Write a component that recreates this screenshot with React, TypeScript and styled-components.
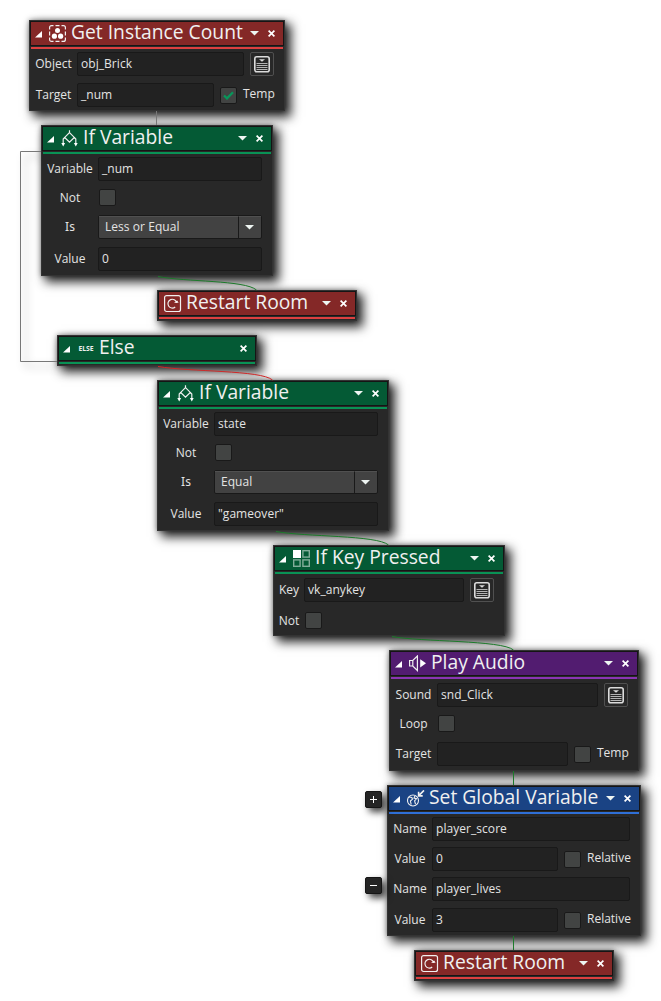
import React from 'react';
import styled, { createGlobalStyle } from 'styled-components';

const Global = createGlobalStyle`
  * { box-sizing: border-box; }
  body { margin: 0; background: #fff; font-family: "Open Sans", "Noto Sans", sans-serif; }
`;

const themes = {
  red: { head: '#842827', stripe: '#dd4040' },
  green: { head: '#045a35', stripe: '#099255' },
  purple: { head: '#521c70', stripe: '#8b35b4' },
  blue: { head: '#1a4384', stripe: '#2f6fd6' },
};
type Tone = keyof typeof themes;

const Canvas = styled.main`
  position: relative;
  width: 661px;
  height: 1001px;
  overflow: hidden;
  background: #fff;
`;
const Wires = styled.svg`
  position: absolute;
  inset: 0;
`;
const Bracket = styled.path`
  filter: drop-shadow(5px 5px 4px rgba(0, 0, 0, 0.4));
`;
const Block = styled.section<{ $x: number; $y: number; $w: number; $h: number }>`
  position: absolute;
  left: ${p => p.$x}px;
  top: ${p => p.$y}px;
  width: ${p => p.$w}px;
  height: ${p => p.$h}px;
  background: #282828;
  border: 1px solid #333;
  box-shadow: 5px 5px 10px 1px rgba(0, 0, 0, 0.85), 0 0 5px rgba(0, 0, 0, 0.4);
`;
const Header = styled.header<{ $tone: Tone; $fold: boolean }>`
  display: flex;
  align-items: center;
  height: 25px;
  border: 1px solid #151515;
  background: ${p => themes[p.$tone].head};
  padding: 0 8px 0 ${p => (p.$fold ? 4 : 5)}px;
`;
const Stripe = styled.div<{ $tone: Tone }>`
  height: 2px;
  margin: 1px 1px 0;
  background: ${p => themes[p.$tone].stripe};
`;
const Title = styled.h2`
  margin: 0 auto 0 4px;
  padding-bottom: 4px;
  font-weight: 400;
  font-size: 19.3px;
  line-height: 22px;
  color: #f0f0f0;
  white-space: nowrap;
`;
const Glyph = styled.svg`
  display: block;
  flex: none;
`;
const IconGlyph = styled(Glyph)`
  margin-top: 1px;
`;
const Body = styled.div`
  padding-left: 3px;
`;
const Row = styled.div<{ $h: number; $mt: number }>`
  display: flex;
  align-items: center;
  height: ${p => p.$h}px;
  margin-top: ${p => p.$mt}px;
`;
const Label = styled.span<{ $w: number; $wide?: boolean }>`
  width: ${p => p.$w}px;
  flex: none;
  padding-right: 3px;
  text-align: center;
  font-family: ${p => (p.$wide ? '"Noto Sans"' : '"Open Sans"')}, sans-serif;
  font-size: 12px;
  line-height: 16px;
  color: #e4e4e4;
  white-space: nowrap;
`;
const Suffix = styled.span`
  padding: 0 0 2px 5px;
  font-size: 12px;
  line-height: 16px;
  color: #e4e4e4;
`;
const CheckGroup = styled.div`
  display: flex;
  align-items: center;
  margin-left: 5px;
`;
const Field = styled.div<{ $w: number }>`
  width: ${p => p.$w}px;
  height: 24px;
  flex: none;
  border: 1px solid #191919;
  border-radius: 2px;
  background: #222;
  padding: 0 3px;
  font-size: 12px;
  letter-spacing: 0.05px;
  line-height: 22px;
  color: #e4e4e4;
  white-space: pre;
`;
const Box = styled.span`
  display: grid;
  place-items: center;
  flex: none;
  width: 17px;
  height: 17px;
  margin: 0 1px;
  border: 1px solid #191919;
  border-radius: 2px;
  background: #424443;
`;
const Select = styled.div`
  display: flex;
  width: 164px;
  height: 24px;
  flex: none;
  border: 1px solid #191919;
  border-radius: 2px;
  background: #424242;
  font-size: 12px;
  letter-spacing: 0.05px;
  line-height: 20px;
  color: #e4e4e4;
`;
const SelectText = styled.span`
  flex: 1;
  padding-left: 6px;
  border-top: 1px solid #505050;
`;
const SelectArrow = styled.span`
  display: grid;
  place-items: center;
  width: 23px;
  padding-right: 2px;
  border-left: 1px solid #191919;
  border-top: 1px solid #505050;
`;
const Picker = styled.span`
  display: grid;
  place-items: center;
  flex: none;
  width: 24px;
  height: 24px;
  margin-left: 6px;
  border: 1px solid #505050;
  border-radius: 2px;
`;
const Toggle = styled.button<{ $x: number; $y: number }>`
  position: absolute;
  left: ${p => p.$x}px;
  top: ${p => p.$y}px;
  display: grid;
  place-items: center;
  width: 17px;
  height: 17px;
  padding: 0;
  border: 1px solid #151515;
  border-radius: 2px;
  background: #242424;
  box-shadow: 4px 4px 7px rgba(0, 0, 0, 0.75);
`;

const Fold = () => (
  <Glyph width="7" height="7">
    <path d="M7 0V6.5H0Z" fill="#fff" />
  </Glyph>
);
const Caret = () => (
  <Glyph width="9" height="5"><path d="M0 0H9L4.5 4.6Z" fill="#eef5f2" /></Glyph>
);
const Controls = styled.div`
  display: flex;
  align-items: center;
  gap: 9px;
`;
const Close = () => (
  <Glyph width="7" height="7"><path d="M.6 .6 6.4 6.4M6.4 .6 .6 6.4" stroke="#fff" strokeWidth="1.7" /></Glyph>
);
const FoldSlot = styled.span`
  padding-top: 1px;
  margin-right: 7px;
`;
const ElseTag = styled.span`
  width: 18px;
  font-size: 6.8px;
  font-weight: 700;
  line-height: 8px;
  color: #eee;
  text-align: center;
`;

type IconName = 'count' | 'diamond' | 'restart' | 'keys' | 'audio' | 'global' | 'else';
const Icon = ({ name }: { name: IconName }) => {
  const s = { fill: 'none', stroke: '#f0f0f0', strokeWidth: 1.2 };
  if (name === 'else') return <ElseTag>ELSE</ElseTag>;
  return (
    <IconGlyph width="18" height="18" viewBox="0 0 18 18">
      {name === 'count' && (
        <g>
          <path
            d="M.6 4.5V2.6Q.6 .6 2.6 .6H4.5M6.5 .6H10.5M12.5 .6H14.4Q16.4 .6 16.4 2.6V4.5M16.4 6.5V10.5M16.4 12.5V14.4Q16.4 16.4 14.4 16.4H12.5M10.5 16.4H6.5M4.5 16.4H2.6Q.6 16.4 .6 14.4V12.5M.6 10.5V6.5"
            {...s}
          />
          <g fill="#fff"><circle cx="8.5" cy="5.4" r="2.5" /><circle cx="5.4" cy="11.2" r="2.6" /><circle cx="11.6" cy="11.2" r="2.6" /></g>
        </g>
      )}
      {name === 'diamond' && (
        <g {...s}>
          <path d="M8.5 .3V3M8.5 2.6 13.3 7.4 8.5 12.2 3.7 7.4ZM3.7 7.4 2.2 9V14M13.3 7.4 14.8 9V14" />
          <path d="M.3 13 2.2 16.4 4.1 13ZM12.9 13 14.8 16.4 16.7 13Z" fill="#fff" stroke="none" />
        </g>
      )}
      {name === 'restart' && (
        <g {...s}>
          <rect x=".6" y=".6" width="15.9" height="15.9" rx="2" />
          <path d="M11.2 12A4.4 4.4 0 1 1 12.6 7.6" />
          <path d="M10 7.8H14.6L13.2 5.4Z" fill="#fff" stroke="none" />
        </g>
      )}
      {name === 'keys' && (
        <g fill="none" stroke="#82ad9a" strokeWidth="1.4">
          <rect x="0" y="0" width="8" height="8" fill="#fff" stroke="none" />
          <rect x="9.9" y=".7" width="6.4" height="6.4" />
          <rect x=".7" y="9.9" width="6.4" height="6.4" />
          <rect x="9.9" y="9.9" width="6.4" height="6.4" />
        </g>
      )}
      {name === 'audio' && (
        <g {...s}>
          <path d="M.6 5.5H3.8L8.4 1V15.5L3.8 11H.6ZM3.8 5.5V11" />
          <path d="M11.2 4.2 17 8.3 11.2 12.4Z" fill="#fff" stroke="none" />
        </g>
      )}
      {name === 'global' && (
        <g {...s} strokeWidth="1.1">
          <circle cx="6" cy="10.5" r="5.5" />
          <path d="M2 7 4.8 7.4 5.5 9.2 3.4 11 4.2 14.5M8 5.8 7 8 9.5 8.6 7.6 10.8 8.5 14" />
          <path d="M17 .4 12 5.4M11.6 1.8V5.9H15.7" strokeWidth="1.6" />
        </g>
      )}
    </IconGlyph>
  );
};

const Pick = () => (
  <Picker>
    <Glyph width="16" height="17" viewBox="0 0 16 17">
      <rect x=".8" y=".8" width="14.4" height="15" rx="2" fill="none" stroke="#dcdcdc" strokeWidth="1.6" />
      <path d="M5 3.2H11L8 5.8Z" fill="#dcdcdc" />
      <path d="M2.5 7.5H13.5M2.5 9.5H13.5M2.5 11.5H13.5M2.5 13.5H13.5" stroke="#b4b4b4" strokeWidth="1" />
    </Glyph>
  </Picker>
);
const Check = ({ on }: { on?: boolean }) => (
  <Box>{on && <Glyph width="11" height="9"><path d="M1 4.5 4 7.4 10 1.2" fill="none" stroke="#08965a" strokeWidth="2.3" /></Glyph>}</Box>
);
const LabelledCheck = ({ on, text }: { on?: boolean; text: string }) => (
  <CheckGroup><Check on={on} /><Suffix>{text}</Suffix></CheckGroup>
);
const Drop = ({ text }: { text: string }) => (
  <Select><SelectText>{text}</SelectText><SelectArrow><Caret /></SelectArrow></Select>
);

type NodeProps = {
  x: number; y: number; w: number; h: number; tone: Tone; icon: IconName; title: string;
  fold?: boolean; menu?: boolean; children?: React.ReactNode;
};
const Node = ({ x, y, w, h, tone, icon, title, fold = true, menu = true, children }: NodeProps) => (
  <Block $x={x} $y={y} $w={w} $h={h}>
    <Header $tone={tone} $fold={fold}>
      {fold && <FoldSlot><Fold /></FoldSlot>}
      <Icon name={icon} />
      <Title>{title}</Title>
      <Controls>{menu && <Caret />}<Close /></Controls>
    </Header>
    <Stripe $tone={tone} />
    <Body>{children}</Body>
  </Block>
);

const Compare = ({ x, y, variable, op, value }: { x: number; y: number; variable: string; op: string; value: string }) => (
  <Node x={x} y={y} w={232} h={151} tone="green" icon="diamond" title="If Variable">
    <Row $h={24} $mt={3}><Label $w={53}>Variable</Label><Field $w={164}>{variable}</Field></Row>
    <Row $h={17} $mt={8}><Label $w={53}>Not</Label><Check /></Row>
    <Row $h={24} $mt={9}><Label $w={53} $wide>Is</Label><Drop text={op} /></Row>
    <Row $h={24} $mt={8}><Label $w={53}>Value</Label><Field $w={164}>{value}</Field></Row>
  </Node>
);

export default function App() {
  return (
    <>
      <Global />
      <Canvas>
        <Node x={29} y={20} w={256} h={91} tone="red" icon="count" title="Get Instance Count">
          <Row $h={24} $mt={3}><Label $w={44}>Object</Label><Field $w={167}>obj_Brick</Field><Pick /></Row>
          <Row $h={24} $mt={7}><Label $w={44}>Target</Label><Field $w={137}>_num</Field><LabelledCheck on text="Temp" /></Row>
        </Node>
        <Compare x={41} y={125} variable="_num" op="Less or Equal" value="0" />
        <Node x={157} y={290} w={200} h={31} tone="red" icon="restart" title="Restart Room" fold={false} />
        <Node x={57} y={335} w={200} h={31} tone="green" icon="else" title="Else" menu={false} />
        <Compare x={157} y={380} variable="state" op="Equal" value={'"gameover"'} />
        <Node x={273} y={545} w={232} h={91} tone="green" icon="keys" title="If Key Pressed">
          <Row $h={24} $mt={4}><Label $w={27}>Key</Label><Field $w={160}>vk_anykey</Field><Pick /></Row>
          <Row $h={17} $mt={10}><Label $w={27}>Not</Label><Check /></Row>
        </Node>
        <Node x={389} y={650} w={250} h={121} tone="purple" icon="audio" title="Play Audio">
          <Row $h={24} $mt={4}><Label $w={44}>Sound</Label><Field $w={161}>snd_Click</Field><Pick /></Row>
          <Row $h={17} $mt={8}><Label $w={44}>Loop</Label><Check /></Row>
          <Row $h={24} $mt={10}><Label $w={44}>Target</Label><Field $w={131} /><LabelledCheck text="Temp" /></Row>
        </Node>
        <Node x={387} y={785} w={254} h={151} tone="blue" icon="global" title="Set Global Variable">
          <Row $h={24} $mt={3}><Label $w={41}>Name</Label><Field $w={198}>player_score</Field></Row>
          <Row $h={24} $mt={6}><Label $w={41}>Value</Label><Field $w={126}>0</Field><LabelledCheck text="Relative" /></Row>
          <Row $h={24} $mt={6}><Label $w={41}>Name</Label><Field $w={198}>player_lives</Field></Row>
          <Row $h={24} $mt={7}><Label $w={41}>Value</Label><Field $w={126}>3</Field><LabelledCheck text="Relative" /></Row>
        </Node>
        <Node x={414} y={950} w={200} h={31} tone="red" icon="restart" title="Restart Room" fold={false} />
        <Toggle $x={365} $y={791}><Glyph width="7" height="7"><path d="M0 3.5H7M3.5 0V7" stroke="#fff" /></Glyph></Toggle>
        <Toggle $x={365} $y={877}><Glyph width="7" height="7"><path d="M0 3.5H7" stroke="#fff" /></Glyph></Toggle>
        <Wires width="661" height="1001" fill="none">
          <path d="M156.5 111V125" stroke="#777" />
          <Bracket d="M41 151.5H20.5V361.5H57" stroke="#777" />
          <path d="M158 276.5C185 282 245 280 256.5 290" stroke="#1c7a2a" />
          <path d="M158 366.5C190 372 261 370 272.5 380" stroke="#d02828" />
          <path d="M276 531.5C305 537 377 535 388.5 545" stroke="#1c7a2a" />
          <path d="M392 636.5C420 642 502 640 513.5 650" stroke="#1c7a2a" />
          <path d="M513.5 771V785M513.5 936V950" stroke="#1c7a2a" />
        </Wires>
      </Canvas>
    </>
  );
}
